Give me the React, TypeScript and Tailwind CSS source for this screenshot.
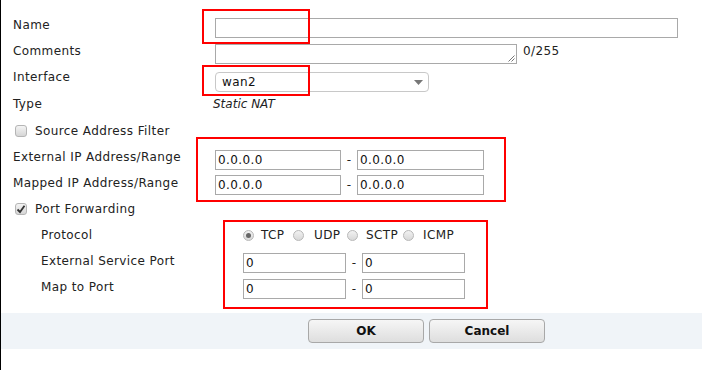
import React from "react";

const font = { fontFamily: '"DejaVu Sans", Verdana, sans-serif' };

function TextBox({ w, value = "" }: { w: string; value?: string }) {
  return (
    <div className={`${w} h-[20px] border border-[#a9a9a9] bg-white pl-[2px] text-[12px] leading-[18px] text-[#111]`}>
      {value}
    </div>
  );
}

function Checkbox({ checked }: { checked?: boolean }) {
  return (
    <div className="w-[12px] h-[12px] rounded-[3px] border border-[#b5b5b5] bg-gradient-to-b from-[#f4f4f4] to-[#d6d6d6] flex items-center justify-center">
      {checked && (
        <svg width="10" height="10" viewBox="0 0 10 10">
          <path d="M1.5 5.5 L4 8 L8.5 1.8" stroke="#333" strokeWidth="1.8" fill="none" />
        </svg>
      )}
    </div>
  );
}

function Radio({ checked }: { checked?: boolean }) {
  return (
    <div className="w-[11px] h-[11px] shrink-0 rounded-full border border-[#b8b8b8] bg-gradient-to-b from-[#f2f2f2] to-[#d8d8d8] flex items-center justify-center">
      {checked && <div className="w-[5px] h-[5px] rounded-full bg-[#666]" />}
    </div>
  );
}

function Row({ h, children }: { h: string; children: React.ReactNode }) {
  return <div className={`flex ${h}`}>{children}</div>;
}

function Label({ children, sub }: { children: React.ReactNode; sub?: boolean }) {
  return (
    <div className={`${sub ? "w-[242px] pl-[40px]" : "w-[214px] pl-[12px]"} shrink-0 flex items-center`}>
      {children}
    </div>
  );
}

export default function App() {
  return (
    <div
      className="relative w-[702px] h-[370px] bg-white border-l border-black text-[12px] tracking-[0.4px] text-[#222]"
      style={font}
    >
      <div className="pt-[11px]">
        <Row h="h-[27px]">
          <Label>Name</Label>
          <div className="mt-[7px]">
            <TextBox w="w-[463px]" />
          </div>
        </Row>
        <Row h="h-[26px]">
          <Label>Comments</Label>
          <div className="mt-[6px] flex items-start">
            <div className="relative w-[302px] h-[20px] border border-[#a9a9a9] bg-white">
              <svg className="absolute right-[1px] bottom-[1px]" width="7" height="7" viewBox="0 0 7 7">
                <path d="M6.5 0.5 L0.5 6.5 M6.5 3.5 L3.5 6.5" stroke="#777" strokeWidth="1" fill="none" />
              </svg>
            </div>
            <div className="ml-[6px] leading-[20px] mt-[-3px]">0/255</div>
          </div>
        </Row>
        <Row h="h-[26px]">
          <Label>Interface</Label>
          <div className="mt-[8px]">
            <div className="w-[214px] h-[20px] rounded-[4px] border border-[#c8c8c8] bg-white flex items-center justify-between pl-[6px] pr-[5px]">
              <span className="text-[12px] text-[#111]">wan2</span>
              <svg width="9" height="5" viewBox="0 0 9 5">
                <path d="M0 0 H9 L4.5 5 Z" fill="#777" />
              </svg>
            </div>
          </div>
        </Row>
        <Row h="h-[27px]">
          <Label>Type</Label>
          <div className="flex items-center -ml-[2px] italic tracking-normal text-[#222]">Static NAT</div>
        </Row>
        <Row h="h-[27px]">
          <div className="pl-[14px] flex items-center gap-[8px]">
            <Checkbox />
            <span>Source Address Filter</span>
          </div>
        </Row>
        <Row h="h-[26px]">
          <Label>External IP Address/Range</Label>
          <div className="mt-[6px] flex items-start">
            <TextBox w="w-[126px]" value="0.0.0.0" />
            <div className="w-[16px] text-center leading-[20px]">-</div>
            <TextBox w="w-[127px]" value="0.0.0.0" />
          </div>
        </Row>
        <Row h="h-[26px]">
          <Label>Mapped IP Address/Range</Label>
          <div className="mt-[5px] flex items-start">
            <TextBox w="w-[126px]" value="0.0.0.0" />
            <div className="w-[16px] text-center leading-[20px]">-</div>
            <TextBox w="w-[127px]" value="0.0.0.0" />
          </div>
        </Row>
        <Row h="h-[26px]">
          <div className="pl-[14px] flex items-center gap-[8px]">
            <Checkbox checked />
            <span>Port Forwarding</span>
          </div>
        </Row>
        <Row h="h-[26px]">
          <Label sub>Protocol</Label>
          <div className="flex items-center">
            <Radio checked />
            <span className="ml-[7px] w-[32px]">TCP</span>
            <Radio />
            <span className="ml-[10px] w-[33px]">UDP</span>
            <Radio />
            <span className="ml-[8px] w-[37px]">SCTP</span>
            <Radio />
            <span className="ml-[9px]">ICMP</span>
          </div>
        </Row>
        <Row h="h-[26px]">
          <Label sub>External Service Port</Label>
          <div className="mt-[5px] flex items-start">
            <TextBox w="w-[103px]" value="0" />
            <div className="w-[16px] text-center leading-[20px]">-</div>
            <TextBox w="w-[103px]" value="0" />
          </div>
        </Row>
        <Row h="h-[26px]">
          <Label sub>Map to Port</Label>
          <div className="mt-[5px] flex items-start">
            <TextBox w="w-[103px]" value="0" />
            <div className="w-[16px] text-center leading-[20px]">-</div>
            <TextBox w="w-[103px]" value="0" />
          </div>
        </Row>
      </div>
      <div className="mt-[13px] h-[36px] bg-[#f0f4f8] pt-[6px] pl-[307px] flex gap-[5px] tracking-normal">
        <button className="w-[116px] h-[24px] rounded-[4px] border border-[#a8a8a8] bg-gradient-to-b from-[#f6f6f6] to-[#dedede] font-bold text-[12px] text-[#111]">
          OK
        </button>
        <button className="w-[116px] h-[24px] rounded-[4px] border border-[#a8a8a8] bg-gradient-to-b from-[#f6f6f6] to-[#dedede] font-bold text-[12px] text-[#111]">
          Cancel
        </button>
      </div>

      <div className="absolute left-[201px] top-[9px] w-[108px] h-[35px] border-2 border-[#ff0000] pointer-events-none" />
      <div className="absolute left-[201px] top-[65px] w-[108px] h-[31px] border-2 border-[#ff0000] pointer-events-none" />
      <div className="absolute left-[195px] top-[137px] w-[310px] h-[65px] border-2 border-[#ff0000] pointer-events-none" />
      <div className="absolute left-[222px] top-[220px] w-[265px] h-[89px] border-2 border-[#ff0000] pointer-events-none" />
    </div>
  );
}
